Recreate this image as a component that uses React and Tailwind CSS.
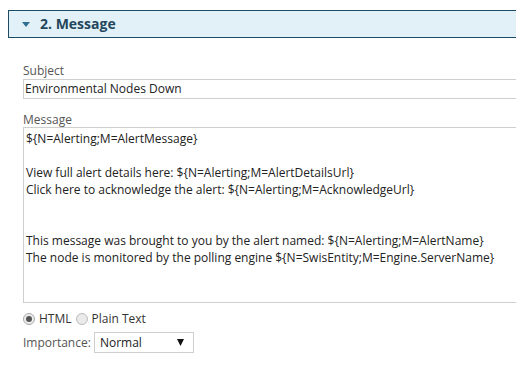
export default function App() {
    const lines = [
        "${N=Alerting;M=AlertMessage}",
        "",
        "View full alert details here: ${N=Alerting;M=AlertDetailsUrl}",
        "Click here to acknowledge the alert: ${N=Alerting;M=AcknowledgeUrl}",
        "",
        "",
        "This message was brought to you by the alert named: ${N=Alerting;M=AlertName}",
        "The node is monitored by the polling engine ${N=SwisEntity;M=Engine.ServerName}",
    ];

    return (
        <div
            className="w-[516px] h-[365px] overflow-hidden bg-white text-[#333]"
            style={{ fontFamily: '"Open Sans", sans-serif' }}
        >
            <div className="ml-[8px] mt-[10px] w-[530px] h-[28px] border border-[#1d4b66] bg-[#e2f1f7] flex items-center">
                <svg width="8" height="5" viewBox="0 0 8 5" className="ml-[13px] mt-[1px]">
                    <polygon points="0,0 8,0 4,5" fill="#2f6f93" />
                </svg>
                <span className="ml-[10px] text-[14px] font-bold text-[#23465c] leading-none">2. Message</span>
            </div>

            <div className="ml-[23px] w-[520px]">
                <div className="mt-[26px] text-[12px] leading-[14px] text-[#555]">Subject</div>
                <div className="mt-[1px] h-[20px] border border-[#cfcfcf] px-[1px] text-[12px] leading-[18px] text-[#222]">
                    Environmental Nodes Down
                </div>

                <div className="mt-[15px] text-[12px] leading-[12px] text-[#555]">Message</div>
                <div className="mt-[1px] h-[176px] border border-[#cfcfcf] pt-[2px] pl-[2px] text-[12px] leading-[17px] text-[#222]">
                    {lines.map((line, i) => (
                        <div key={i} className="h-[17px] whitespace-pre">{line}</div>
                    ))}
                </div>

                <div className="mt-[7px] flex items-center text-[12px] text-[#333]">
                    <span className="w-[12px] h-[12px] rounded-full border border-[#a9a9a9] bg-[#ececec] flex items-center justify-center">
                        <span className="w-[6px] h-[6px] rounded-full bg-[#555]" />
                    </span>
                    <span className="ml-[4px]">HTML</span>
                    <span className="ml-[4px] w-[12px] h-[12px] rounded-full border border-[#bdbdbd] bg-[#eaeaea]" />
                    <span className="ml-[4px]">Plain Text</span>
                </div>

                <div className="mt-[4px] flex items-center text-[12px]">
                    <span className="text-[#555]">Importance:</span>
                    <div className="ml-[3px] w-[100px] h-[21px] border border-[#cfcfcf] flex items-center justify-between pl-[5px] pr-[9px] text-[#222]">
                        <span>Normal</span>
                        <svg width="7" height="7" viewBox="0 0 7 7">
                            <polygon points="0,0 7,0 3.5,7" fill="#111" />
                        </svg>
                    </div>
                </div>
            </div>
        </div>
    );
}
